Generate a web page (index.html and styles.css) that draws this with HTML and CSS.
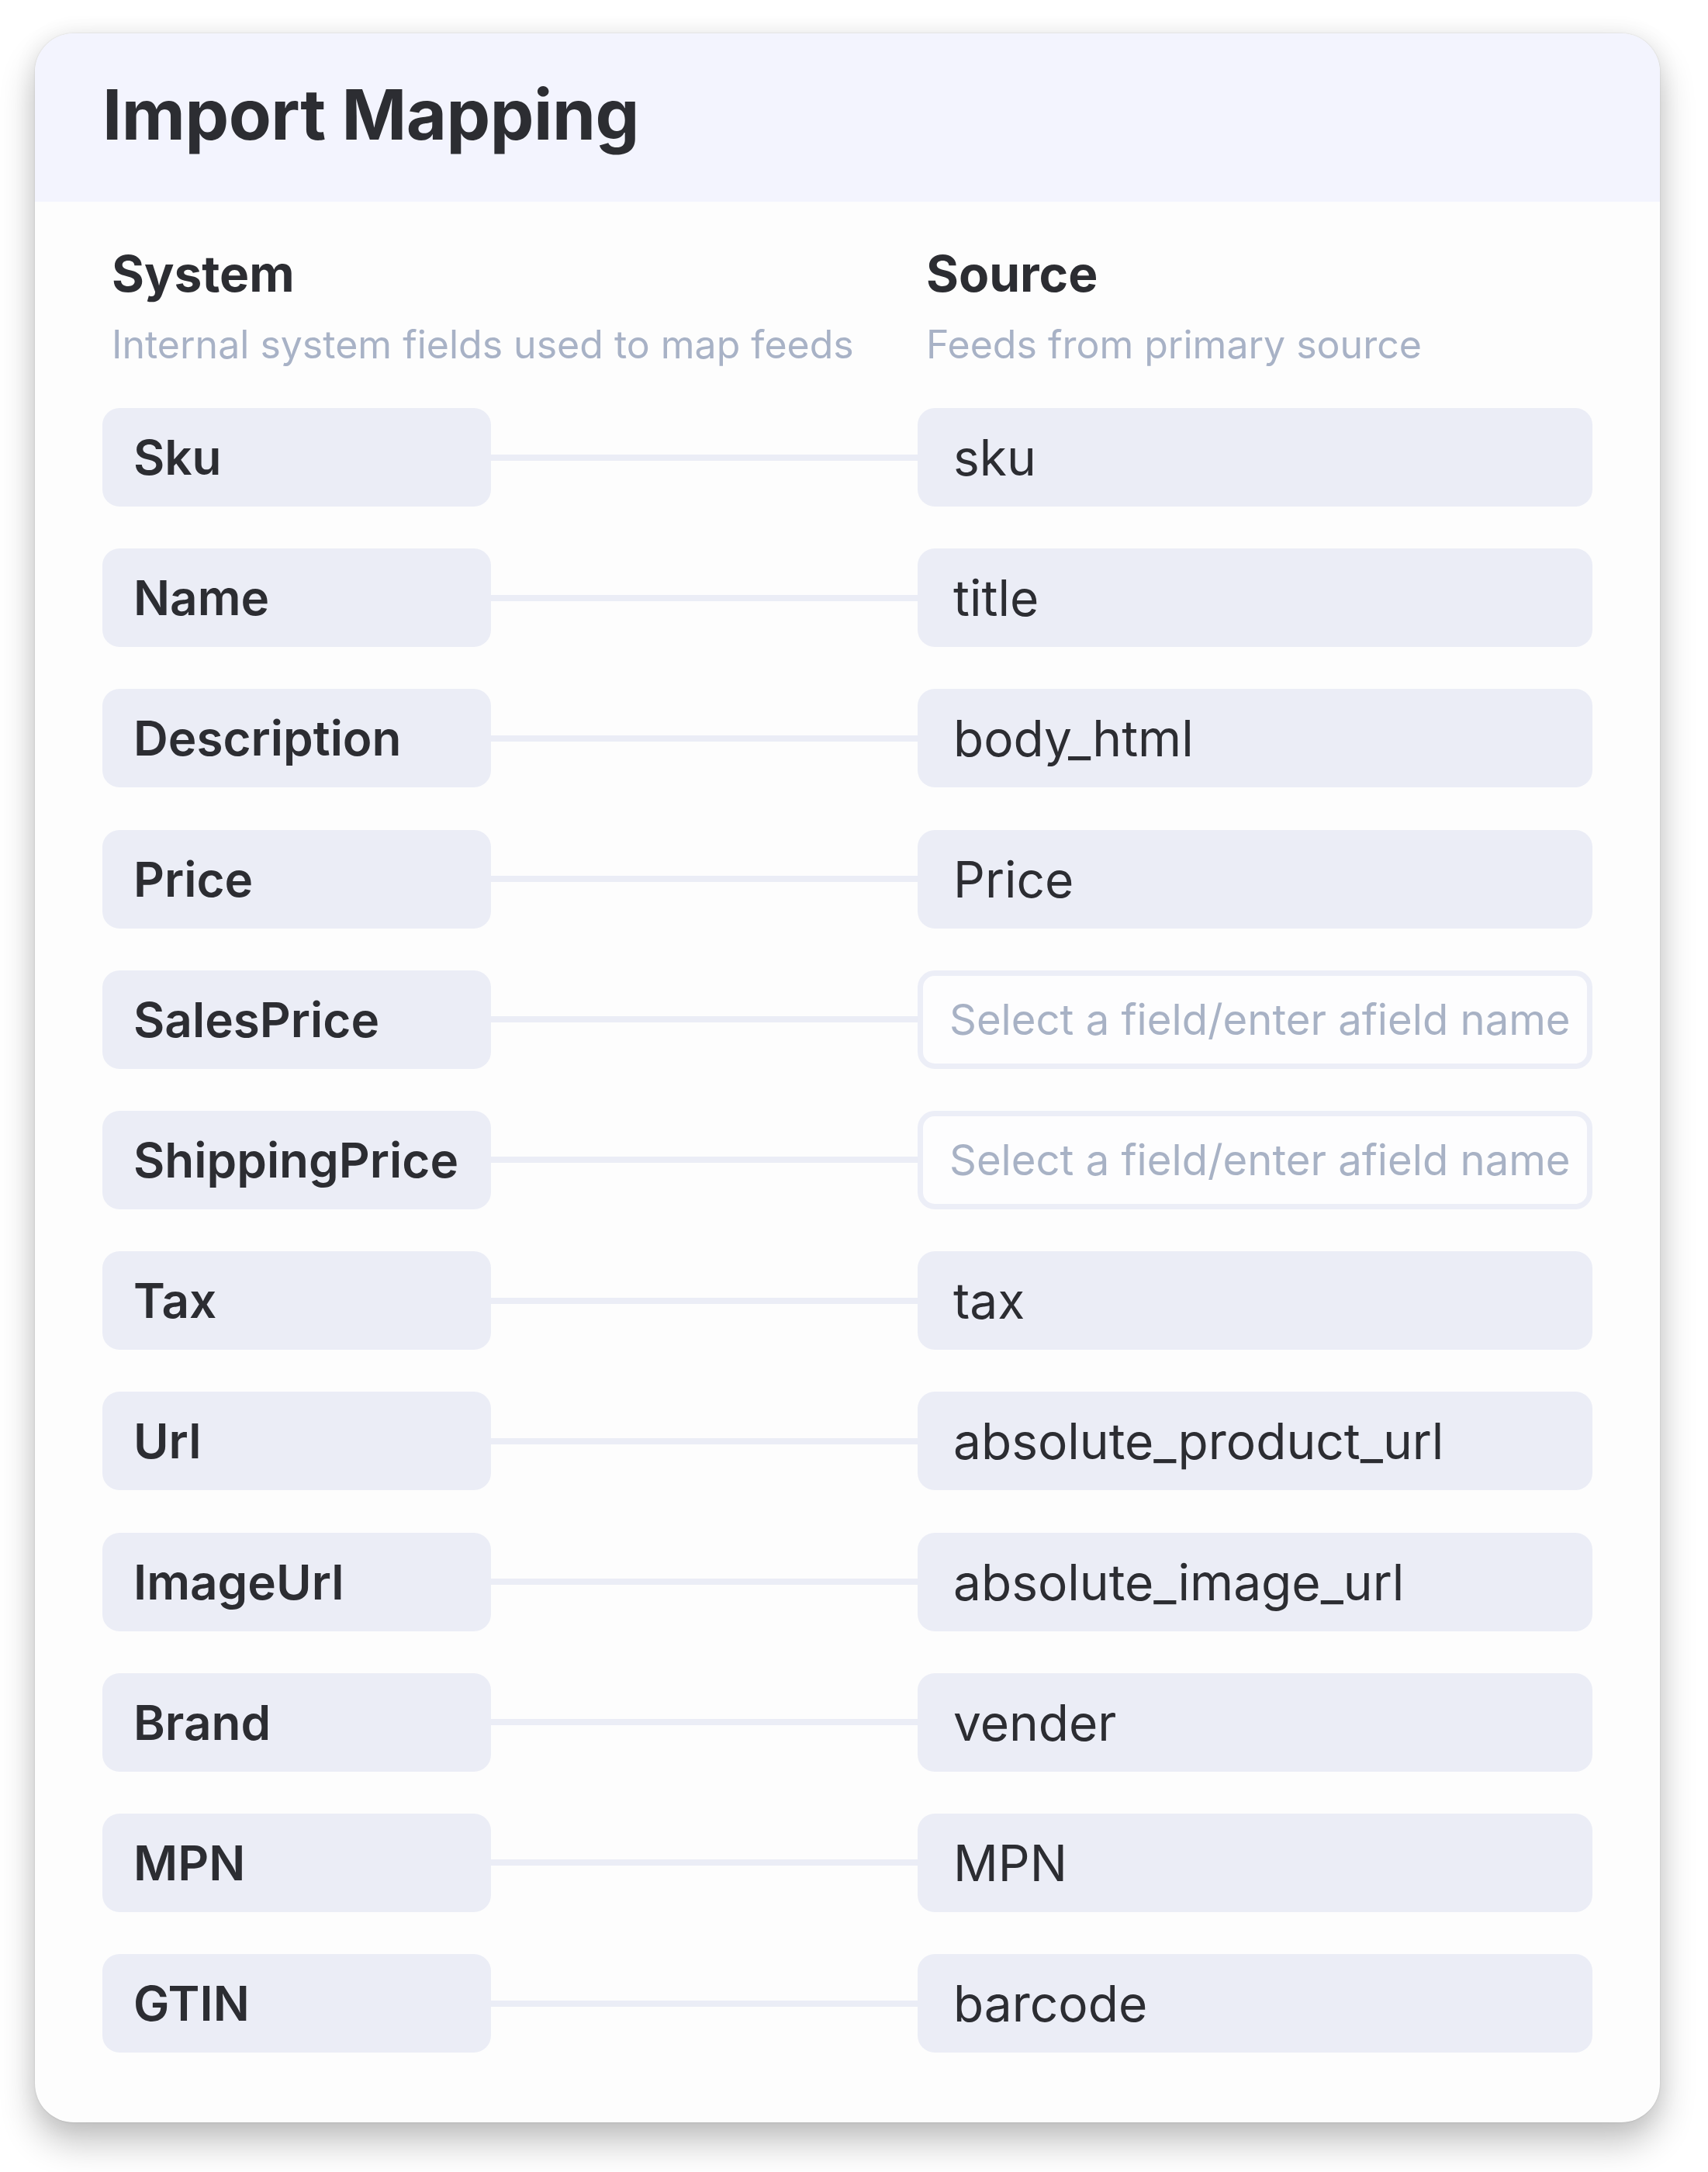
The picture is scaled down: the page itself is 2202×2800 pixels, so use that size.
FILE: index.html
```html
<!DOCTYPE html>
<html lang="en">
<head>
<meta charset="utf-8">
<title>Import Mapping</title>
<link rel="stylesheet" href="styles.css">
</head>
<body>
<div class="card">
  <div class="card-header">
    <h1 class="title">Import Mapping</h1>
  </div>
  <div class="card-body">
    <div class="col-heads">
      <div class="col-head">
        <div class="col-title">System</div>
        <div class="col-sub">Internal system fields used to map feeds</div>
      </div>
      <div class="col-head">
        <div class="col-title">Source</div>
        <div class="col-sub">Feeds from primary source</div>
      </div>
    </div>
    <div class="rows">
      <div class="row"><div class="sys">Sku</div><div class="link"></div><div class="src">sku</div></div>
      <div class="row"><div class="sys">Name</div><div class="link"></div><div class="src">title</div></div>
      <div class="row"><div class="sys">Description</div><div class="link"></div><div class="src">body_html</div></div>
      <div class="row"><div class="sys">Price</div><div class="link"></div><div class="src">Price</div></div>
      <div class="row"><div class="sys">SalesPrice</div><div class="link"></div><div class="src empty">Select a field/enter afield name</div></div>
      <div class="row"><div class="sys">ShippingPrice</div><div class="link"></div><div class="src empty">Select a field/enter afield name</div></div>
      <div class="row"><div class="sys">Tax</div><div class="link"></div><div class="src">tax</div></div>
      <div class="row"><div class="sys">Url</div><div class="link"></div><div class="src">absolute_product_url</div></div>
      <div class="row"><div class="sys">ImageUrl</div><div class="link"></div><div class="src">absolute_image_url</div></div>
      <div class="row"><div class="sys">Brand</div><div class="link"></div><div class="src">vender</div></div>
      <div class="row"><div class="sys">MPN</div><div class="link"></div><div class="src">MPN</div></div>
      <div class="row"><div class="sys">GTIN</div><div class="link"></div><div class="src">barcode</div></div>
    </div>
  </div>
</div>
</body>
</html>
```
FILE: styles.css
```css
html, body {
  margin: 0;
  padding: 0;
  background: #ffffff;
}
body {
  font-family: Inter, "Noto Sans", "Liberation Sans", sans-serif;
  color: #2c2d32;
  padding: 43px 0 0 45px;
  min-height: 2800px;
  box-sizing: border-box;
}
.card {
  width: 2095px;
  border-radius: 50px;
  overflow: hidden;
  background: #fdfdfd;
  box-shadow: 0 0 2px rgba(0,0,0,0.16), 0 26px 46px rgba(0,0,0,0.24), 0 0 30px rgba(0,0,0,0.07);
}
.card-header {
  background: #f3f4fe;
  height: 217px;
  box-sizing: border-box;
  padding: 60px 0 0 87px;
}
.title {
  margin: 0;
  font-size: 90px;
  line-height: 90px;
  font-weight: 700;
  letter-spacing: -0.5px;
  color: #2c2d32;
}
.card-body {
  padding: 61px 87px 90px 87px;
}
.col-heads {
  display: grid;
  grid-template-columns: 1050px 1fr;
}
.col-head {
  padding-left: 12px;
}
.col-title {
  font-size: 64px;
  line-height: 64px;
  font-weight: 700;
  color: #2c2d32;
}
.col-sub {
  margin-top: 34px;
  font-size: 50px;
  line-height: 50px;
  font-weight: 400;
  color: #a8b2c6;
}
.rows {
  margin-top: 57px;
  display: flex;
  flex-direction: column;
  gap: 54.2px;
}
.row {
  display: grid;
  grid-template-columns: 501px 1fr 870px;
  height: 127px;
}
.sys, .src {
  display: flex;
  align-items: center;
  border-radius: 22px;
  background: #ebedf6;
  white-space: nowrap;
  overflow: hidden;
  box-sizing: border-box;
}
.sys {
  padding-left: 40px;
  font-size: 62px;
  font-weight: 600;
}
.src {
  padding-left: 46px;
  font-size: 64px;
  font-weight: 400;
}
.src.empty {
  background: #fdfdfe;
  border: 7px solid #eceef7;
  padding-left: 34px;
  font-size: 54.4px;
  color: #a8b2c5;
}
.link {
  align-self: center;
  height: 8px;
  background: #ebedf6;
}
```
